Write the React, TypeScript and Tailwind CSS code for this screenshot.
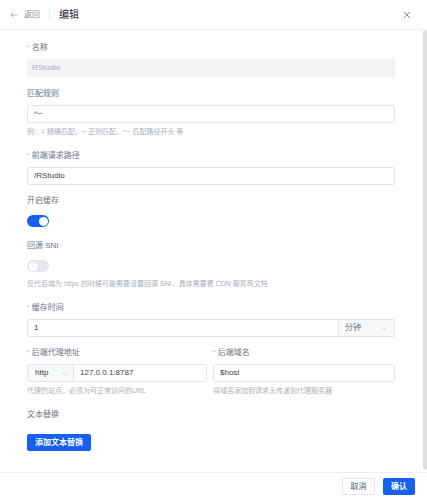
import React from 'react';

const font = { fontFamily: '"Liberation Sans", "Noto Sans CJK SC", sans-serif' };

const Label: React.FC<{ text: string; required?: boolean }> = ({ text, required }) => (
  <div className="h-[12px] mb-[5px] flex items-center text-[8px] leading-[12px] text-[#6b7280]">
    {required && <span className="text-[#dcb0b0] mr-[2px] text-[7px]">*</span>}
    <span>{text}</span>
  </div>
);

const Helper: React.FC<{ text: string }> = ({ text }) => (
  <div className="mt-[4px] mb-[4px] h-[10px] text-[7px] leading-[10px] text-[#aab0b8] whitespace-nowrap">
    {text}
  </div>
);

const Chevron = () => (
  <svg width="7" height="7" viewBox="0 0 12 12" fill="none" stroke="#a9aeb8" strokeWidth="1">
    <path d="M2.5 4.5 6 8l3.5-3.5" />
  </svg>
);

const Toggle: React.FC<{ on?: boolean }> = ({ on }) => (
  <div className="h-[18px] flex items-center">
    <div
      className={
        on
          ? 'w-[22px] h-[12px] rounded-full bg-[#1660f0] flex items-center justify-end px-[1.5px]'
          : 'w-[22px] h-[12px] rounded-full bg-[#e5e6eb] flex items-center justify-start px-[1.5px]'
      }
    >
      <div className="w-[9px] h-[9px] rounded-full bg-white" />
    </div>
  </div>
);

const inputCls =
  'h-[18px] border border-[#e5e6eb] rounded-[2px] bg-white px-[6px] flex items-center text-[8px] text-[#3a3f47]';

export default function App() {
  return (
    <div style={font} className="w-[427px] h-[500px] bg-white flex flex-col overflow-hidden">
      {/* Header */}
      <div className="h-[30px] border-b border-[#eef0f3] flex items-center pl-[10px] pr-[16px] shrink-0">
        <svg width="8" height="8" viewBox="0 0 12 12" fill="none" stroke="#86909c" strokeWidth="1">
          <path d="M11 6H1.5M5 2.5 1.5 6 5 9.5" />
        </svg>
        <span className="ml-[6px] text-[8px] text-[#86909c]">返回</span>
        <div className="w-px h-[10px] bg-[#e5e6eb] mx-[9px]" />
        <span className="text-[10px] text-[#1d2129]">编辑</span>
        <div className="flex-1" />
        <svg width="8" height="8" viewBox="0 0 12 12" fill="none" stroke="#4e5969" strokeWidth="1">
          <path d="M1.5 1.5l9 9M10.5 1.5l-9 9" />
        </svg>
      </div>

      {/* Body */}
      <div className="flex-1 flex min-h-0">
        <div className="flex-1 overflow-hidden pl-[27px] pr-[28px] pt-[12px]">
          <Label text="名称" required />
          <div className="h-[18px] rounded-[2px] bg-[#f2f3f5] px-[5px] flex items-center text-[8px] text-[#a9aeb8] mb-[11px]">
            RStudio
          </div>

          <Label text="匹配规则" />
          <div className={inputCls}>^~</div>
          <Helper text="例：= 精确匹配，~ 正则匹配，^~ 匹配路径开头 等" />
          <div className="h-[9px]" />

          <Label text="前端请求路径" required />
          <div className={inputCls + ' mb-[10px]'}>/RStudio</div>

          <Label text="开启缓存" />
          <div className="mb-[10px]">
            <Toggle on />
          </div>

          <Label text="回源 SNI" />
          <Toggle />
          <Helper text="反代后端为 https 的时候可能需要设置回源 SNI，具体需要看 CDN 服务商文档" />
          <div className="h-[9px]" />

          <Label text="缓存时间" required />
          <div className="flex h-[18px] mb-[10px]">
            <div className="flex-1 h-[18px] border border-[#e5e6eb] rounded-l-[2px] px-[6px] flex items-center text-[8px] text-[#3a3f47]">
              1
            </div>
            <div className="w-[56px] h-[18px] border border-l-0 border-[#e5e6eb] rounded-r-[2px] bg-[#f7f8fa] pl-[6px] pr-[6px] flex items-center justify-between text-[8px] text-[#6b7280]">
              <span>分钟</span>
              <Chevron />
            </div>
          </div>

          <div className="flex gap-[6px]">
            <div className="w-[180px]">
              <Label text="后端代理地址" required />
              <div className="flex h-[18px]">
                <div className="w-[47px] h-[18px] border border-[#e5e6eb] rounded-l-[2px] bg-[#f7f8fa] pl-[7px] pr-[5px] flex items-center justify-between text-[8px] text-[#3a3f47]">
                  <span>http</span>
                  <Chevron />
                </div>
                <div className="flex-1 h-[18px] border border-l-0 border-[#e5e6eb] rounded-r-[2px] px-[6px] flex items-center text-[8px] text-[#3a3f47]">
                  127.0.0.1:8787
                </div>
              </div>
              <Helper text="代理的站点，必须为可正常访问的URL" />
            </div>
            <div className="flex-1">
              <Label text="后端域名" required />
              <div className={inputCls}>$host</div>
              <Helper text="将域名添加到请求头传递到代理服务器" />
            </div>
          </div>
          <div className="h-[9px]" />

          <Label text="文本替换" />
          <div className="h-[8px]" />
          <button className="h-[17px] w-[64px] rounded-[2px] bg-[#1660f0] text-white text-[8px] font-bold flex items-center justify-center">
            添加文本替换
          </button>
          <div className="h-[24px]" />
        </div>
        {/* scrollbar */}
        <div className="w-[4px] flex flex-col pb-[2px]">
          <div className="flex-1 rounded-full bg-[#dcdee2]" />
        </div>
      </div>

      {/* Footer */}
      <div className="h-[28px] border-t border-[#eef0f3] shrink-0 flex items-center justify-end gap-[8px] pr-[12px]">
        <button className="h-[17px] w-[33px] rounded-[2px] border border-[#e5e6eb] bg-white text-[8px] text-[#4e5969] flex items-center justify-center">
          取消
        </button>
        <button className="h-[17px] w-[32px] rounded-[2px] bg-[#1660f0] text-white text-[8px] font-bold flex items-center justify-center">
          确认
        </button>
      </div>
    </div>
  );
}
